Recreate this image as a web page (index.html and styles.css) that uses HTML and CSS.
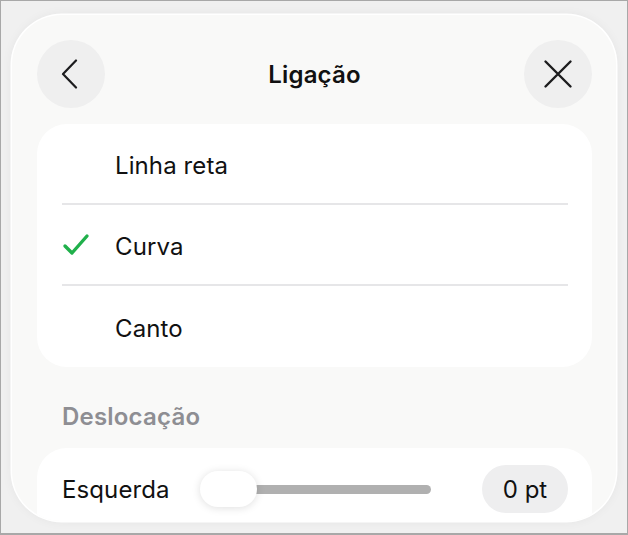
FILE: index.html
```html
<!DOCTYPE html>
<html lang="pt">
<head>
<meta charset="utf-8">
<link rel="stylesheet" href="styles.css">
</head>
<body>
<div class="frame">
  <div class="panel">
    <div class="header">
      <button class="round-btn" aria-label="Voltar">
        <svg width="22" height="30" viewBox="0 0 22 30"><path d="M16 1.5 L3 15 L16 28.5" fill="none" stroke="#1c1c1e" stroke-width="2.2" stroke-linecap="round" stroke-linejoin="round"/></svg>
      </button>
      <div class="title">Ligação</div>
      <button class="round-btn" aria-label="Fechar">
        <svg width="30" height="30" viewBox="0 0 30 30"><path d="M2.5 2.5 L27.5 27.5 M27.5 2.5 L2.5 27.5" fill="none" stroke="#1c1c1e" stroke-width="2.4" stroke-linecap="round"/></svg>
      </button>
    </div>
    <div class="card">
      <div class="row"><span class="check"></span><span class="label">Linha reta</span></div>
      <div class="row"><span class="check"><svg width="28" height="24" viewBox="0 0 28 24"><path d="M3 13 L10 20 L25 3" fill="none" stroke="#20b04b" stroke-width="3.4" stroke-linecap="round" stroke-linejoin="round"/></svg></span><span class="label">Curva</span></div>
      <div class="row"><span class="check"></span><span class="label">Canto</span></div>
    </div>
    <div class="section-title">Deslocação</div>
    <div class="card slider-card">
      <div class="slider-row">
        <span class="slider-label">Esquerda</span>
        <div class="slider">
          <div class="track"></div>
          <div class="thumb"></div>
        </div>
        <div class="value">0 pt</div>
      </div>
    </div>
  </div>
</div>
</body>
</html>
```
FILE: styles.css
```css
* { box-sizing: border-box; }
html, body { margin: 0; padding: 0; }
body {
  font-family: Inter, "Liberation Sans", sans-serif;
  background: #ffffff;
}
.frame {
  width: 628px;
  height: 535px;
  border: 1px solid #a8a8a8;
  border-bottom-width: 2px;
  background: #f0f0f0;
  padding: 14px 12px 0 11px;
  overflow: hidden;
}
.panel {
  width: 604px;
  height: 506px;
  background: #f9f9f8;
  border-radius: 50px;
  box-shadow: 0 0 0 1.5px #ffffff, 0 0 12px rgba(0,0,0,0.06);
  overflow: hidden;
  padding: 25px 24px 0 25px;
}
.header {
  display: flex;
  align-items: center;
  justify-content: space-between;
  height: 68px;
}
.round-btn {
  width: 68px;
  height: 68px;
  border-radius: 50%;
  border: none;
  background: #efefef;
  display: flex;
  align-items: center;
  justify-content: center;
  padding: 0;
}
.title {
  font-size: 24px;
  font-weight: 600;
  color: #111;
  letter-spacing: 0.2px;
}
.card {
  background: #ffffff;
  border-radius: 30px;
  margin-top: 16px;
  padding: 0 24px 0 25px;
}
.row {
  height: 81px;
  display: flex;
  align-items: center;
  border-bottom: 2px solid #e6e6e8;
}
.row:last-child { border-bottom: none; }
.check {
  width: 53px;
  display: flex;
  align-items: center;
}
.label {
  font-size: 24px;
  color: #111;
  letter-spacing: 0.1px;
  padding-top: 3px;
}
.section-title {
  font-size: 24px;
  font-weight: 600;
  color: #8e8e93;
  margin: 36px 0 0 25px;
  height: 28px;
  line-height: 28px;
  letter-spacing: 0.2px;
}
.slider-card {
  margin-top: 17px;
  height: 120px;
}
.slider-row {
  display: flex;
  align-items: center;
  height: 82px;
}
.slider-label {
  font-size: 24px;
  color: #111;
  width: 138px;
  letter-spacing: 0.1px;
}
.slider {
  position: relative;
  width: 232px;
  height: 36px;
  display: flex;
  align-items: center;
}
.track {
  margin-left: 50px;
  width: 181px;
  height: 9px;
  border-radius: 5px;
  background: #b0b0b0;
}
.thumb {
  position: absolute;
  left: 0;
  top: 0;
  width: 57px;
  height: 36px;
  border-radius: 18px;
  background: #fff;
  box-shadow: 0 1px 8px rgba(0,0,0,0.13);
}
.value {
  margin-left: auto;
  width: 86px;
  height: 48px;
  border-radius: 24px;
  background: #eeeeef;
  font-size: 24px;
  color: #111;
  display: flex;
  align-items: center;
  justify-content: center;
}
```
